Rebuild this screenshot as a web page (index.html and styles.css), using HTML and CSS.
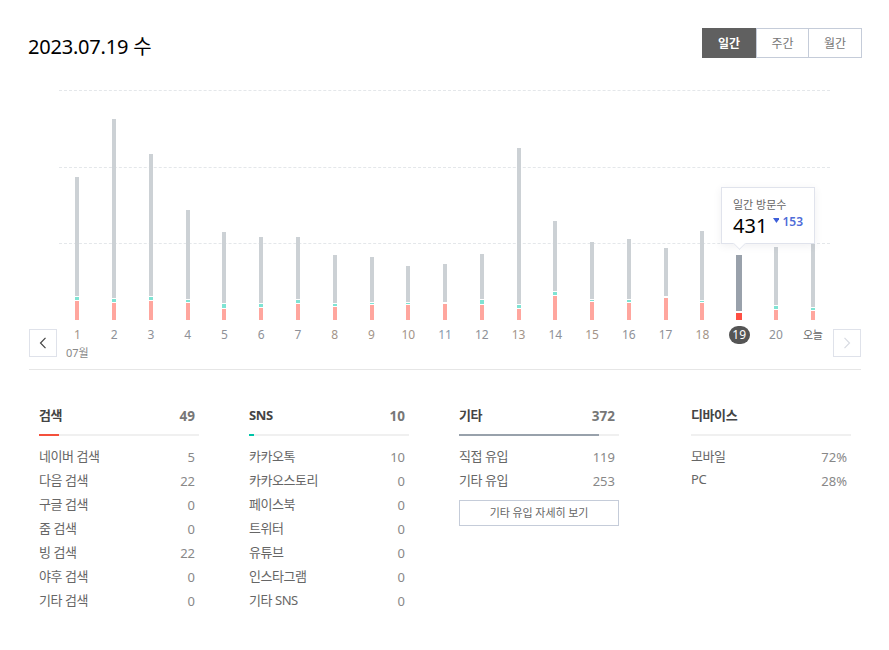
FILE: index.html
```html
<!DOCTYPE html>
<html lang="ko">
<head>
<meta charset="utf-8">
<title>방문 통계</title>
<link rel="stylesheet" href="styles.css">
</head>
<body>
<main class="page">
  <header class="head">
    <h1 class="date">2023.07.19 수</h1>
    <div class="tabs">
      <button class="tab tab-on">일간</button>
      <button class="tab">주간</button>
      <button class="tab">월간</button>
    </div>
  </header>

  <section class="plot">
    <div class="grid"><i></i><i></i><i></i></div>
    <div class="bars">
      <div class="col"><div class="bar" style="height:143px"><b class="g"></b><b class="t" style="height:3px"></b><b class="r" style="height:19px"></b></div></div>
      <div class="col"><div class="bar" style="height:201px"><b class="g"></b><b class="t" style="height:3px"></b><b class="r" style="height:17px"></b></div></div>
      <div class="col"><div class="bar" style="height:166px"><b class="g"></b><b class="t" style="height:3px"></b><b class="r" style="height:19px"></b></div></div>
      <div class="col"><div class="bar" style="height:110px"><b class="g"></b><b class="t" style="height:2px"></b><b class="r" style="height:17px"></b></div></div>
      <div class="col"><div class="bar" style="height:88px"><b class="g"></b><b class="t" style="height:4px"></b><b class="r" style="height:11px"></b></div></div>
      <div class="col"><div class="bar" style="height:83px"><b class="g"></b><b class="t" style="height:3px"></b><b class="r" style="height:12px"></b></div></div>
      <div class="col"><div class="bar" style="height:83px"><b class="g"></b><b class="t" style="height:3px"></b><b class="r" style="height:16px"></b></div></div>
      <div class="col"><div class="bar" style="height:65px"><b class="g"></b><b class="t" style="height:2px"></b><b class="r" style="height:13px"></b></div></div>
      <div class="col"><div class="bar" style="height:63px"><b class="g"></b><b class="t" style="height:1px"></b><b class="r" style="height:15px"></b></div></div>
      <div class="col"><div class="bar" style="height:54px"><b class="g"></b><b class="t" style="height:1px"></b><b class="r" style="height:15px"></b></div></div>
      <div class="col"><div class="bar" style="height:56px"><b class="g"></b><b class="t" style="height:0"></b><b class="r" style="height:16px"></b></div></div>
      <div class="col"><div class="bar" style="height:66px"><b class="g"></b><b class="t" style="height:4px"></b><b class="r" style="height:15px"></b></div></div>
      <div class="col"><div class="bar" style="height:172px"><b class="g"></b><b class="t" style="height:3px"></b><b class="r" style="height:11px"></b></div></div>
      <div class="col"><div class="bar" style="height:99px"><b class="g"></b><b class="t" style="height:3px"></b><b class="r" style="height:24px"></b></div></div>
      <div class="col"><div class="bar" style="height:78px"><b class="g"></b><b class="t" style="height:1px"></b><b class="r" style="height:18px"></b></div></div>
      <div class="col"><div class="bar" style="height:81px"><b class="g"></b><b class="t" style="height:2px"></b><b class="r" style="height:17px"></b></div></div>
      <div class="col"><div class="bar" style="height:72px"><b class="g"></b><b class="t" style="height:0"></b><b class="r" style="height:22px"></b></div></div>
      <div class="col"><div class="bar" style="height:89px"><b class="g"></b><b class="t" style="height:1px"></b><b class="r" style="height:17px"></b></div></div>
      <div class="col"><div class="bar bar-on" style="height:65px"><b class="g"></b><b class="t" style="height:0"></b><b class="r" style="height:7px"></b></div></div>
      <div class="col"><div class="bar" style="height:73px"><b class="g"></b><b class="t" style="height:3px"></b><b class="r" style="height:10px"></b></div></div>
      <div class="col"><div class="bar" style="height:80px"><b class="g"></b><b class="t" style="height:2px"></b><b class="r" style="height:9px"></b></div></div>
    </div>
    <div class="tip">
      <div class="tip-title">일간 방문수</div>
      <div class="tip-nums">
        <strong class="tip-num">431</strong>
        <svg class="tip-arrow" width="7" height="5" viewBox="0 0 7 5"><path d="M0 0h7L3.5 5z"/></svg>
        <span class="tip-diff">153</span>
      </div>
    </div>
  </section>

  <section class="axis">
    <button class="nav" aria-label="이전">
      <svg width="8" height="12" viewBox="0 0 8 12"><path d="M6.5 .8 1.5 6l5 5.2" fill="none" stroke="#444" stroke-width="1.2"/></svg>
    </button>
    <div class="days">
      <div class="day"><span class="dn warm">1</span><span class="mon">07월</span></div>
      <div class="day"><span class="dn">2</span></div>
      <div class="day"><span class="dn">3</span></div>
      <div class="day"><span class="dn">4</span></div>
      <div class="day"><span class="dn">5</span></div>
      <div class="day"><span class="dn">6</span></div>
      <div class="day"><span class="dn">7</span></div>
      <div class="day"><span class="dn warm">8</span></div>
      <div class="day"><span class="dn warm">9</span></div>
      <div class="day"><span class="dn warm">10</span></div>
      <div class="day"><span class="dn cool">11</span></div>
      <div class="day"><span class="dn">12</span></div>
      <div class="day"><span class="dn warm">13</span></div>
      <div class="day"><span class="dn">14</span></div>
      <div class="day"><span class="dn warm">15</span></div>
      <div class="day"><span class="dn">16</span></div>
      <div class="day"><span class="dn">17</span></div>
      <div class="day"><span class="dn warm">18</span></div>
      <div class="day"><span class="dn dn-on">19</span></div>
      <div class="day"><span class="dn">20</span></div>
      <div class="day"><span class="dn today">오늘</span></div>
    </div>
    <button class="nav nav-off" aria-label="다음">
      <svg width="8" height="12" viewBox="0 0 8 12"><path d="M1.5 .8 6.5 6l-5 5.2" fill="none" stroke="#d8dbe2" stroke-width="1.2"/></svg>
    </button>
  </section>

  <section class="stats">
    <div class="stat">
      <div class="stat-head"><span class="ttl">검색</span><span class="cnt">49</span></div>
      <div class="track"><i class="fill fill-red"></i></div>
      <div class="row"><span class="lbl">네이버 검색</span><span class="val">5</span></div>
      <div class="row"><span class="lbl">다음 검색</span><span class="val">22</span></div>
      <div class="row"><span class="lbl">구글 검색</span><span class="val">0</span></div>
      <div class="row"><span class="lbl">줌 검색</span><span class="val">0</span></div>
      <div class="row"><span class="lbl">빙 검색</span><span class="val">22</span></div>
      <div class="row"><span class="lbl">야후 검색</span><span class="val">0</span></div>
      <div class="row"><span class="lbl">기타 검색</span><span class="val">0</span></div>
    </div>
    <div class="stat">
      <div class="stat-head"><span class="ttl">SNS</span><span class="cnt">10</span></div>
      <div class="track"><i class="fill fill-teal"></i></div>
      <div class="row"><span class="lbl">카카오톡</span><span class="val">10</span></div>
      <div class="row"><span class="lbl">카카오스토리</span><span class="val">0</span></div>
      <div class="row"><span class="lbl">페이스북</span><span class="val">0</span></div>
      <div class="row"><span class="lbl">트위터</span><span class="val">0</span></div>
      <div class="row"><span class="lbl">유튜브</span><span class="val">0</span></div>
      <div class="row"><span class="lbl">인스타그램</span><span class="val">0</span></div>
      <div class="row"><span class="lbl">기타 SNS</span><span class="val">0</span></div>
    </div>
    <div class="stat">
      <div class="stat-head"><span class="ttl">기타</span><span class="cnt">372</span></div>
      <div class="track"><i class="fill fill-gray"></i></div>
      <div class="row"><span class="lbl">직접 유입</span><span class="val">119</span></div>
      <div class="row"><span class="lbl">기타 유입</span><span class="val">253</span></div>
      <button class="more">기타 유입 자세히 보기</button>
    </div>
    <div class="stat stat-last">
      <div class="stat-head"><span class="ttl">디바이스</span></div>
      <div class="track"></div>
      <div class="row"><span class="lbl">모바일</span><span class="val">72%</span></div>
      <div class="row"><span class="lbl">PC</span><span class="val">28%</span></div>
    </div>
  </section>
</main>
</body>
</html>
```
FILE: styles.css
```css
* { box-sizing: border-box; }
html, body { margin: 0; padding: 0; background: #fff; }
body { font-family: "Noto Sans", "Noto Sans CJK KR", sans-serif; color: #666; }
button { font-family: inherit; cursor: pointer; }

.page { width: 889px; padding: 28px 28px 0 29px; }

.head { display: flex; justify-content: space-between; align-items: center; height: 30px; margin-right: -1px; }
.date { margin: 0 0 0 -1px; padding-top: 8px; font-size: 20px; font-weight: 400; color: #000; letter-spacing: -0.2px; line-height: 38px; }
.tabs { display: flex; }
.tab { width: 53px; height: 30px; margin-left: -1px; padding: 0; background: #fff; border: 1px solid #c5ccd9; font-size: 12px; color: #777; }
.tab-on { width: 54px; margin-left: 0; background: #606060; border-color: #606060; color: #fff; font-weight: 700; }
.tab-on + .tab { margin-left: 0; }
.tab:last-child { width: 54px; }

.plot { position: relative; width: 772px; height: 230px; margin: 32px 0 0 30px; }
.grid { position: absolute; inset: 0 1px 0 0; display: flex; flex-direction: column; }
.grid i { display: block; height: 76.5px; border-top: 1px dashed #e4e7ea; }
.bars { position: relative; display: flex; height: 100%; align-items: flex-end; }
.col { flex: 1 1 0; display: flex; justify-content: center; }
.bar { display: flex; flex-direction: column; gap: 1px; width: 4px; }
.bar b { display: block; flex: none; }
.bar .g { flex: 1; background: #ccd1d5; }
.bar .t { background: #7fe3d3; }
.bar .r { background: #ffa69e; }
.bar-on { width: 6px; }
.bar-on .g { background: #99a1ab; }
.bar-on .r { background: #ff4f43; }

.tip { position: absolute; left: 662px; top: 97px; width: 94px; height: 57px; padding: 9px 11px 0; background: #fff; border: 1px solid #e0e3ec; box-shadow: 0 2px 8px rgba(60, 70, 90, .08); }
.tip::after { content: ""; position: absolute; left: 12px; bottom: -6px; width: 10px; height: 10px; background: #fff; border-right: 1px solid #e0e3ec; border-bottom: 1px solid #e0e3ec; transform: rotate(45deg) scale(.8); }
.tip-title { font-size: 11px; line-height: 16px; color: #666; }
.tip-nums { display: flex; align-items: flex-start; }
.tip-num { width: 40px; font-size: 20px; line-height: 26px; font-weight: 400; color: #000; }
.tip-arrow { margin-top: 5px; fill: #3d5fd9; }
.tip-diff { margin: 1px 0 0 3px; font-size: 12px; line-height: 16px; font-weight: 600; color: #4f6cd8; }

.axis { display: flex; justify-content: space-between; align-items: flex-start; height: 50px; border-bottom: 1px solid #e6e6e6; }
.nav { display: flex; align-items: center; justify-content: center; flex: none; width: 28px; height: 28px; margin-top: 9px; padding: 0; background: #fff; border: 1px solid #dfe2ea; }
.days { display: flex; width: 772px; }
.day { flex: 1 1 0; display: flex; flex-direction: column; align-items: center; padding-top: 6px; font-size: 11px; }
.dn { display: block; min-width: 21px; height: 18px; font-size: 12px; line-height: 18px; text-align: center; color: #8e9198; white-space: nowrap; }
.warm { color: #a39488; }
.cool { color: #8899ad; }
.today { font-size: 11px; letter-spacing: -0.5px; color: #666; }
.dn-on { border-radius: 9px; background: #555; color: #fff; }
.mon { line-height: 18px; color: #888; white-space: nowrap; }

.stats { display: flex; gap: 50px; padding: 35px 0 0 10px; }
.stat { width: 160px; }
.stat-last { margin-left: 22px; }
.stat-head { display: flex; justify-content: space-between; align-items: center; height: 29px; padding: 0 4px 9px 0; font-size: 13px; font-weight: 700; line-height: 20px; color: #444; }
.ttl { padding-bottom: 1px; letter-spacing: -0.4px; }
.cnt { padding-top: 2px; font-size: 13.5px; color: #777; }
.track { height: 2px; margin-bottom: 8px; background: #f0f0f0; }
.fill { display: block; height: 2px; }
.fill-red { width: 20px; background: #f4503c; }
.fill-teal { width: 5px; background: #00c4a8; }
.fill-gray { width: 140px; background: #98a1ab; }
.row { display: flex; justify-content: space-between; align-items: center; height: 24px; padding-right: 4px; font-size: 13px; color: #666; }
.lbl { padding-bottom: 2px; letter-spacing: -0.45px; }
.val { padding-top: 1px; color: #888; }
.more { display: block; width: 160px; height: 26px; margin-top: 8px; padding: 0 0 2px; background: #fff; border: 1px solid #c5ccd9; font-size: 11px; letter-spacing: -0.1px; color: #666; }
```
